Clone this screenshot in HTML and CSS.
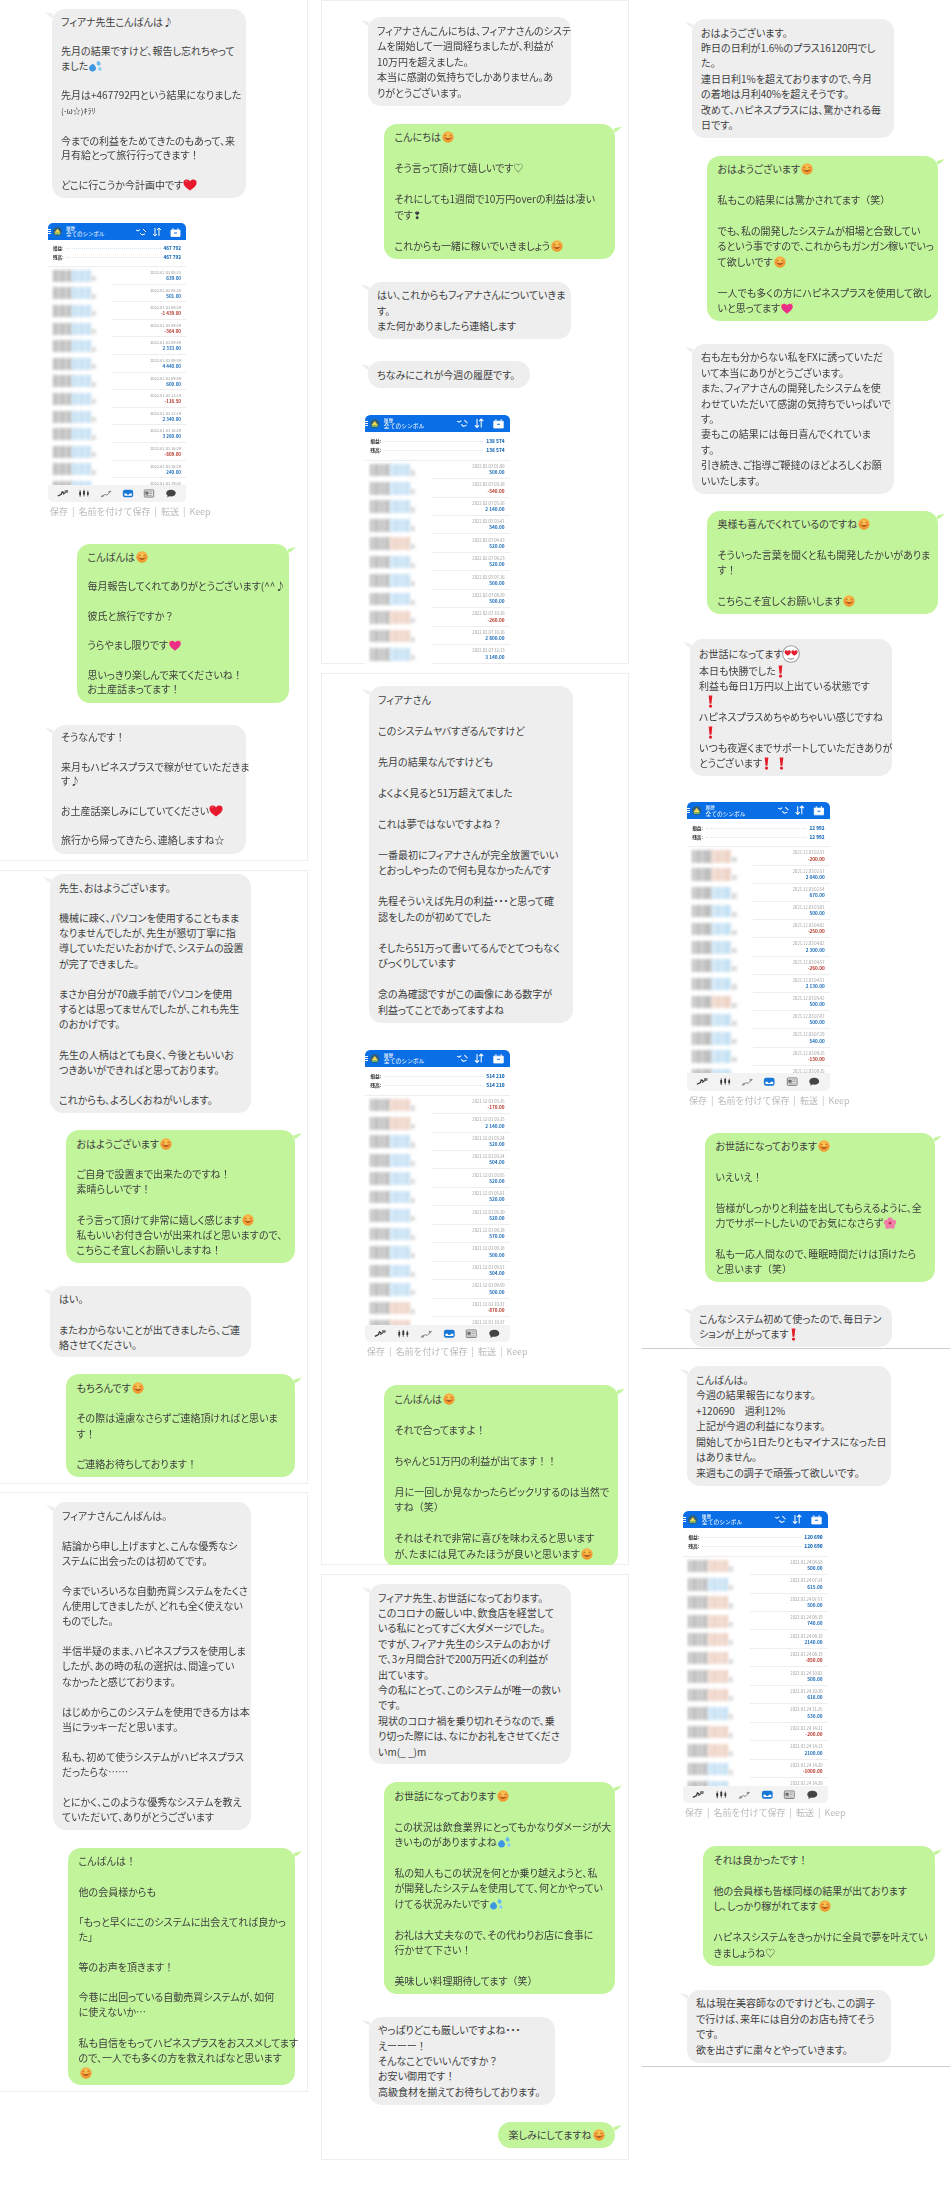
FILE: index.html
```html
<!DOCTYPE html>
<html lang="ja">
<head>
  <meta charset="UTF-8">
  <title>お客様の声</title>
  <link rel="stylesheet" href="styles.css">
</head>
<body>
  <!-- icon sprite -->
  <svg class="sprite" xmlns="http://www.w3.org/2000/svg">
    <defs>
      <radialGradient id="face" cx="50%" cy="35%" r="70%">
        <stop offset="0" stop-color="#ffc95a"/>
        <stop offset="1" stop-color="#ee8a22"/>
      </radialGradient>
    </defs>
    <symbol id="smile" viewBox="0 0 14 14">
      <circle cx="7" cy="7" r="6.6" fill="url(#face)"/>
      <path d="M3 5.6q1.2-1.4 2.4 0M8.6 5.6q1.2-1.4 2.4 0" fill="none" stroke="#8a4a10" stroke-width=".9"/>
      <path d="M3.4 8.2q3.6 3.8 7.2 0q-3.6 1.2-7.2 0z" fill="#b5391c" stroke="#8a4a10" stroke-width=".5"/>
      <ellipse cx="2.8" cy="7.8" rx="1.2" ry=".7" fill="#f47a4a"/>
      <ellipse cx="11.2" cy="7.8" rx="1.2" ry=".7" fill="#f47a4a"/>
    </symbol>
    <symbol id="heart" viewBox="0 0 14 12">
      <path d="M7 11.6C3 8.8.4 6.6.4 3.8.4 1.8 1.9.6 3.6.6 5 .6 6.2 1.2 7 2.4 7.8 1.2 9 .6 10.4.6c1.7 0 3.2 1.2 3.2 3.2 0 2.8-2.6 5-6.6 7.8z" fill="#e8192c"/>
      <path d="M2.4 3.2q.6-1.2 2-1.2" fill="none" stroke="#ff9aa0" stroke-width=".8"/>
    </symbol>
    <symbol id="pinkheart" viewBox="0 0 15 13">
      <path d="M7.5 12.6C3.6 9.8 1.2 7.6 1.2 5 1.2 3 2.7 1.8 4.3 1.8c1.4 0 2.5.6 3.2 1.8C8.2 2.4 9.4 1.8 10.7 1.8c1.7 0 3.1 1.2 3.1 3.2 0 2.6-2.4 4.8-6.3 7.6z" fill="#ec2f86"/>
      <path d="M1.6 1.6l.5 1 1 .4-1 .4-.5 1-.5-1-1-.4 1-.4zM13 .4l.4.9.9.3-.9.4-.4.9-.4-.9-.9-.4.9-.3z" fill="#f7b23a"/>
    </symbol>
    <symbol id="sweat" viewBox="0 0 13 11.500">
      <path d="M4.600 3.600C6.600 5.200 7.600 6.600 7.400 8.400 7.100 10.400 5.200 11.400 3.400 11 1.400 10.500.4 8.800.9 7 1.400 5.400 2.800 4.400 4.600 3.600z" fill="#3d97e2"/>
      <path d="M9.400.6c1.400 1 2.600 1.600 2.400 3.200-.2 1.200-1.400 1.800-2.400 1.400C8.200 4.800 7.800 3.600 8.200 2.600 8.500 1.800 8.800 1.200 9.400.6z" fill="#64b7ef"/>
      <path d="M11 6.400c1 .8 2 1.400 1.800 2.600-.2 1-1.200 1.400-2 1.200-1-.3-1.400-1.200-1-2.200.2-.6.6-1.200 1.200-1.600z" fill="#8ccdf5"/>
    </symbol>
    <symbol id="heart-eyes" viewBox="0 0 14 14">
      <circle cx="7" cy="7" r="6.500" fill="#fff" stroke="#9a9a9a" stroke-width=".8"/>
      <path d="M4.400 8.400C2.900 7.300 2 6.500 2 5.400 2 4.600 2.600 4.100 3.200 4.100c.5 0 1 .3 1.200.7.300-.4.700-.7 1.200-.7.700 0 1.300.5 1.300 1.300 0 1.100-.9 1.900-2.500 3zM9.600 8.400C8.100 7.300 7.200 6.500 7.200 5.400c0-.8.600-1.300 1.200-1.300.5 0 1 .3 1.200.7.300-.4.700-.7 1.200-.7.700 0 1.300.5 1.300 1.300 0 1.100-.9 1.900-2.500 3z" fill="#e5202e"/>
      <path d="M4.600 10.200q2.400 1.600 4.800 0" fill="none" stroke="#888" stroke-width=".8"/>
    </symbol>
    <symbol id="excl" viewBox="0 0 6 12">
      <path d="M1.300.4h3.400L3.900 8H2.100z" fill="#e3202a"/>
      <circle cx="3" cy="10.200" r="1.500" fill="#e3202a"/>
    </symbol>
    <symbol id="flower" viewBox="0 0 16 14">
      <g fill="#ee7ea8">
        <circle cx="8" cy="3.200" r="3"/>
        <circle cx="3.800" cy="6.200" r="3"/>
        <circle cx="12.200" cy="6.200" r="3"/>
        <circle cx="5.400" cy="10.800" r="3"/>
        <circle cx="10.600" cy="10.800" r="3"/>
      </g>
      <circle cx="8" cy="7.200" r="1.600" fill="#c9264f"/>
    </symbol>
    <!-- icons of the trading app -->
    <symbol id="t-quote" viewBox="0 0 14 10">
      <path d="M1 8l4-2 1-3 2 1M7 6l5-4" fill="none" stroke="#333" stroke-width="1.400"/>
      <rect x="9" y="1" width="4" height="3" fill="#777"/>
    </symbol>
    <symbol id="t-chart" viewBox="0 0 14 10">
      <path d="M2.500 1v8M7 .5v8M11.500 1.500v7" stroke="#333" stroke-width=".8"/>
      <path d="M1.500 3h2v4h-2zM6 2h2v4.500H6zM10.500 3.500h2v3h-2z" fill="#333"/>
    </symbol>
    <symbol id="t-trade" viewBox="0 0 14 10">
      <path d="M1 9l5-3 2 1 5-5" fill="none" stroke="#666" stroke-width=".9"/>
      <circle cx="11" cy="3" r="1.300" fill="#888"/>
      <circle cx="3" cy="8" r="1.300" fill="#888"/>
    </symbol>
    <symbol id="t-hist" viewBox="0 0 14 10">
      <path d="M1 3q0-2.500 2.500-2.500h7Q13 .5 13 3v4q0 2.500-2.500 2.500h-7Q1 9.500 1 7z" fill="#1878d8"/>
      <path d="M2.500 5h2.700l.8 1.500h2l.8-1.500h2.700v2.600h-8.500z" fill="#fff"/>
    </symbol>
    <symbol id="t-news" viewBox="0 0 14 10">
      <rect x="1.500" y=".8" width="11" height="8.400" rx=".8" fill="#eee" stroke="#555" stroke-width=".8"/>
      <path d="M3 3h3v3H3zM7 3h4M7 5h4M3 7.500h8" stroke="#555" stroke-width=".6" fill="#777"/>
    </symbol>
    <symbol id="t-chat" viewBox="0 0 14 10">
      <path d="M7 .5c3.300 0 5.600 1.700 5.600 4S10.300 8.500 7 8.500c-.7 0-1.400-.1-2-.2L2.500 9.700l.6-2.200C2 6.800 1.400 5.700 1.400 4.500c0-2.300 2.300-4 5.600-4z" fill="#444"/>
    </symbol>
  </svg>

  <div class="page">
    <!-- Left column -->
    <div class="col">
      <section class="panel panel-a">
        <div class="msg gray gap-9">フィアナ先生こんばんは♪<br><br>先月の結果ですけど、報告し忘れちゃって<br>ました<svg class="emo"><use href="#sweat"/></svg><br><br>先月は+467792円という結果になりました<br><small>(-ω☆)ｷﾗﾘ</small><br><br>今までの利益をためてきたのもあって、来<br>月有給とって旅行行ってきます！<br><br>どこに行こうか今計画中です<svg class="emo"><use href="#heart"/></svg></div>
        <div class="shot-wrap gap-25"><div class="shot" data-shot="a"></div><p class="caption">保存 | 名前を付けて保存 | 転送 | Keep</p></div>
        <div class="msg green gap-26">こんばんは<svg class="emo"><use href="#smile"/></svg><br><br>毎月報告してくれてありがとうございます(^^♪<br><br>彼氏と旅行ですか？<br><br>うらやまし限りです<svg class="emo"><use href="#pinkheart"/></svg><br><br>思いっきり楽しんで来てくださいね！<br>お土産話まってます！</div>
        <div class="msg gray gap-22">そうなんです！<br><br>来月もハピネスプラスで稼がせていただきま<br>す♪<br><br>お土産話楽しみにしていてください<svg class="emo"><use href="#heart"/></svg><br><br>旅行から帰ってきたら、連絡しますね☆</div>
      </section>

      <section class="panel panel-b">
        <div class="msg gray gap-4">先生、おはようございます。<br><br>機械に疎く、パソコンを使用することもまま<br>なりませんでしたが、先生が懇切丁寧に指<br>導していただいたおかげで、システムの設置<br>が完了できました。<br><br>まさか自分が70歳手前でパソコンを使用<br>するとは思ってませんでしたが、これも先生<br>のおかげです。<br><br>先生の人柄はとても良く、今後ともいいお<br>つきあいができればと思っております。<br><br>これからも、よろしくおねがいします。</div>
        <div class="msg green gap-17">おはようございます<svg class="emo"><use href="#smile"/></svg><br><br>ご自身で設置まで出来たのですね！<br>素晴らしいです！<br><br>そう言って頂けて非常に嬉しく感じます<svg class="emo"><use href="#smile"/></svg><br>私もいいお付き合いが出来ればと思いますので、<br>こちらこそ宜しくお願いしますね！</div>
        <div class="msg gray gap-23">はい。<br><br>またわからないことが出てきましたら、ご連<br>絡させてください。</div>
        <div class="msg green gap-17">もちろんです<svg class="emo"><use href="#smile"/></svg><br><br>その際は遠慮なさらずご連絡頂ければと思いま<br>す！<br><br>ご連絡お待ちしております！</div>
      </section>

      <section class="panel panel-c">
        <div class="msg gray gap-10">フィアナさんこんばんは。<br><br>結論から申し上げますと、こんな優秀なシ<br>ステムに出会ったのは初めてです。<br><br>今までいろいろな自動売買システムをたくさ<br>ん使用してきましたが、どれも全く使えない<br>ものでした。<br><br>半信半疑のまま、ハピネスプラスを使用しま<br>したが、あの時の私の選択は、間違ってい<br>なかったと感じております。<br><br>はじめからこのシステムを使用できる方は本<br>当にラッキーだと思います。<br><br>私も、初めて使うシステムがハピネスプラス<br>だったらな……<br><br>とにかく、このような優秀なシステムを教え<br>ていただいて、ありがとうございます</div>
        <div class="msg green gap-18">こんばんは！<br><br>他の会員様からも<br><br>「もっと早くにこのシステムに出会えてれば良かっ<br>た」<br><br>等のお声を頂きます！<br><br>今巷に出回っている自動売買システムが、如何<br>に使えないか…<br><br>私も自信をもってハピネスプラスをおススメしてます<br>ので、一人でも多くの方を救えればなと思います<br><svg class="emo"><use href="#smile"/></svg></div>
      </section>
    </div>

    <!-- Middle column -->
    <div class="col">
      <section class="panel panel-d">
        <div class="msg gray gap-17">フィアナさんこんにちは、フィアナさんのシステ<br>ムを開始して一週間経ちましたが、利益が<br>10万円を超えました。<br>本当に感謝の気持ちでしかありません。あ<br>りがとうございます。</div>
        <div class="msg green gap-18">こんにちは<svg class="emo"><use href="#smile"/></svg><br><br>そう言って頂けて嬉しいです♡<br><br>それにしても1週間で10万円overの利益は凄い<br>です❢<br><br>これからも一緒に稼いでいきましょう<svg class="emo"><use href="#smile"/></svg></div>
        <div class="msg gray gap-23">はい、これからもフィアナさんについていきま<br>す。<br>また何かありましたら連絡します</div>
        <div class="msg gray w-162 gap-22">ちなみにこれが今週の履歴です。</div>
        <div class="shot-wrap gap-27"><div class="shot" data-shot="b"></div></div>
      </section>

      <section class="panel panel-e">
        <div class="msg gray gap-13">フィアナさん<br><br>このシステムヤバすぎるんですけど<br><br>先月の結果なんですけども<br><br>よくよく見ると51万超えてました<br><br>これは夢ではないですよね？<br><br>一番最初にフィアナさんが完全放置でいい<br>とおっしゃったので何も見なかったんです<br><br>先程そういえば先月の利益・・・と思って確<br>認をしたのが初めてでした<br><br>そしたら51万って書いてるんでとてつもなく<br>びっくりしています<br><br>念の為確認ですがこの画像にある数字が<br>利益ってことであってますよね</div>
        <div class="shot-wrap gap-27"><div class="shot" data-shot="c"></div><p class="caption">保存 | 名前を付けて保存 | 転送 | Keep</p></div>
        <div class="msg green gap-27">こんばんは<svg class="emo"><use href="#smile"/></svg><br><br>それで合ってますよ！<br><br>ちゃんと51万円の利益が出てます！！<br><br>月に一回しか見なかったらビックリするのは当然で<br>すね（笑）<br><br>それはそれで非常に喜びを味わえると思います<br>が、たまには見てみたほうが良いと思います<svg class="emo"><use href="#smile"/></svg></div>
      </section>

      <section class="panel panel-f">
        <div class="msg gray gap-10">フィアナ先生、お世話になっております。<br>このコロナの厳しい中、飲食店を経営して<br>いる私にとってすごく大ダメージでした。<br>ですが、フィアナ先生のシステムのおかげ<br>で、3ヶ月間合計で200万円近くの利益が<br>出ています。<br>今の私にとって、このシステムが唯一の救い<br>です。<br>現状のコロナ禍を乗り切れそうなので、乗<br>り切った際には、なにかお礼をさせてくださ<br>いm(_ _)m</div>
        <div class="msg green gap-18">お世話になっております<svg class="emo"><use href="#smile"/></svg><br><br>この状況は飲食業界にとってもかなりダメージが大<br>きいものがありますよね<svg class="emo"><use href="#sweat"/></svg><br><br>私の知人もこの状況を何とか乗り越えようと、私<br>が開発したシステムを使用してて、何とかやってい<br>けてる状況みたいです<svg class="emo"><use href="#sweat"/></svg><br><br>お礼は大丈夫なので、その代わりお店に食事に<br>行かせて下さい！<br><br>美味しい料理期待してます（笑）</div>
        <div class="msg gray w-186 gap-23">やっぱりどこも厳しいですよね・・・<br>えーーー！<br>そんなことでいいんですか？<br>お安い御用です！<br>高級食材を揃えてお待ちしております。</div>
        <div class="msg green w-117 gap-17">楽しみにしてますね<svg class="emo"><use href="#smile"/></svg></div>
      </section>
    </div>

    <!-- Right column -->
    <div class="col">
      <section class="panel panel-g">
        <div class="msg gray gap-19">おはようございます。<br>昨日の日利が1.6%のプラス16120円でし<br>た。<br>連日日利1%を超えておりますので、今月<br>の着地は月利40%を超えそうです。<br>改めて、ハピネスプラスには、驚かされる毎<br>日です。</div>
        <div class="msg green gap-18">おはようございます<svg class="emo"><use href="#smile"/></svg><br><br>私もこの結果には驚かされてます（笑）<br><br>でも、私の開発したシステムが相場と合致してい<br>るという事ですので、これからもガンガン稼いでいっ<br>て欲しいです<svg class="emo"><use href="#smile"/></svg><br><br>一人でも多くの方にハピネスプラスを使用して欲し<br>いと思ってます<svg class="emo"><use href="#pinkheart"/></svg></div>
        <div class="msg gray gap-23">右も左も分からない私をFXに誘っていただ<br>いて本当にありがとうございます。<br>また、フィアナさんの開発したシステムを使<br>わせていただいて感謝の気持ちでいっぱいで<br>す。<br>妻もこの結果には毎日喜んでくれていま<br>す。<br>引き続き、ご指導ご鞭撻のほどよろしくお願<br>いいたします。</div>
        <div class="msg green gap-17">奥様も喜んでくれているのですね<svg class="emo"><use href="#smile"/></svg><br><br>そういった言葉を聞くと私も開発したかいがありま<br>す！<br><br>こちらこそ宜しくお願いします<svg class="emo"><use href="#smile"/></svg></div>
        <div class="msg gray lower gap-25">お世話になってます<svg class="emo emo-big"><use href="#heart-eyes"/></svg><br>本日も快勝でした<svg class="emo excl"><use href="#excl"/></svg><br>利益も毎日1万円以上出ている状態です<br>&nbsp;&nbsp;&nbsp;<svg class="emo excl"><use href="#excl"/></svg><br>ハピネスプラスめちゃめちゃいい感じですね<br>&nbsp;&nbsp;&nbsp;<svg class="emo excl"><use href="#excl"/></svg><br>いつも夜遅くまでサポートしていただきありが<br>とうございます<svg class="emo excl"><use href="#excl"/></svg>&nbsp;&nbsp;&nbsp;<svg class="emo excl"><use href="#excl"/></svg></div>
        <div class="shot-wrap gap-26"><div class="shot" data-shot="d"></div><p class="caption">保存 | 名前を付けて保存 | 転送 | Keep</p></div>
        <div class="msg green lower gap-26">お世話になっております<svg class="emo"><use href="#smile"/></svg><br><br>いえいえ！<br><br>皆様がしっかりと利益を出してもらえるように、全<br>力でサポートしたいのでお気になさらず<svg class="emo"><use href="#flower"/></svg><br><br>私も一応人間なので、睡眠時間だけは頂けたら<br>と思います（笑）</div>
        <div class="msg gray lower gap-23">こんなシステム初めて使ったので、毎日テン<br>ションが上がってます<svg class="emo excl"><use href="#excl"/></svg></div>
      </section>

      <section class="panel panel-i">
        <div class="msg gray gap-17">こんばんは。<br>今週の結果報告になります。<br>+120690　週利12%<br>上記が今週の利益になります。<br>開始してから1日たりともマイナスになった日<br>はありません。<br>来週もこの調子で頑張って欲しいです。</div>
        <div class="shot-wrap gap-25"><div class="shot" data-shot="e"></div><p class="caption">保存 | 名前を付けて保存 | 転送 | Keep</p></div>
        <div class="msg green gap-27">それは良かったです！<br><br>他の会員様も皆様同様の結果が出ております<br>し、しっかり稼がれてます<svg class="emo"><use href="#smile"/></svg><br><br>ハピネスシステムをきっかけに全員で夢を叶えてい<br>きましょうね♡</div>
        <div class="msg gray gap-24">私は現在美容師なのですけども、この調子<br>で行けば、来年には自分のお店も持てそう<br>です。<br>欲を出さずに粛々とやっていきます。</div>
      </section>
    </div>
  </div>

  <script>
  // Full-width punctuation keeps its side space, the kana stay proportional
  document.querySelectorAll(".msg").forEach((msg) => {
    msg.innerHTML = msg.innerHTML.replace(/[！？（）]/g, '<span class="fw">$&</span>');
  });

  // Trading history screenshots: [time, profit, tint of the blurred symbol]
  // The last row of a list runs under the tab bar, so it has no profit to show
  const shotData = {
    a: { total: "467 792", day: "2022.01.03", rows: [
      ["08:15", "639.00", "b"], ["08:38", "501.00", "b"], ["09:29", "-1 439.00", "b"], ["09:29", "-364.00", "b"],
      ["09:59", "2 333.00", "b"], ["09:59", "4 440.00", "b"], ["09:59", "600.00", "b"], ["13:19", "-116.50", "b"],
      ["13:19", "2 340.00", "b"], ["16:29", "3 260.00", "b"], ["16:29", "-809.00", "b"], ["16:29", "240.00", "b"], ["19:55", "", "b"]
    ] },
    b: { total: "138 574", day: "2022.02.07", rows: [
      ["01:06", "500.00", "b"], ["03:16", "-540.00", "b"], ["03:16", "2 140.00", "b"], ["03:41", "540.00", "b"],
      ["04:43", "520.00", "r"], ["06:23", "520.00", "b"], ["07:16", "500.00", "b"], ["08:29", "500.00", "b"],
      ["10:16", "-260.00", "r"], ["10:16", "2 800.00", "r"], ["12:13", "3 140.00", "b"]
    ] },
    c: { total: "514 210", day: "2021.12.01", rows: [
      ["03:15", "-170.00", "r"], ["03:15", "2 140.00", "r"], ["03:24", "520.00", "b"], ["03:24", "504.00", "b"],
      ["03:55", "520.00", "b"], ["05:01", "520.00", "b"], ["05:30", "520.00", "b"], ["08:18", "570.00", "b"],
      ["09:18", "500.00", "b"], ["09:57", "504.00", "b"], ["09:59", "500.00", "b"], ["10:37", "-870.00", "r"], ["10:37", "", "r"]
    ] },
    d: { total: "12 992", day: "2021.12.03", rows: [
      ["02:57", "-200.00", "r"], ["02:57", "2 040.00", "r"], ["02:54", "670.00", "b"], ["03:01", "500.00", "b"],
      ["04:02", "-250.00", "b"], ["04:02", "2 300.00", "b"], ["04:57", "-260.00", "b"], ["04:57", "2 130.00", "b"],
      ["05:42", "500.00", "r"], ["07:07", "500.00", "b"], ["07:29", "540.00", "b"], ["09:15", "-130.00", "b"], ["09:15", "", "b"]
    ] },
    e: { total: "120 690", day: "2022.01.24", rows: [
      ["04:58", "500.00", "r"], ["07:24", "615.00", "b"], ["07:57", "500.00", "r"], ["08:19", "740.00", "r"],
      ["08:19", "2140.00", "r"], ["08:19", "-850.00", "r"], ["10:02", "500.00", "r"], ["10:30", "616.00", "r"],
      ["11:25", "530.00", "b"], ["14:11", "-200.00", "r"], ["14:13", "2100.00", "r"], ["14:20", "-1000.00", "b"], ["14:20", "", "b"]
    ] }
  };

  const tabs = ["t-quote", "t-chart", "t-trade", "t-hist", "t-news", "t-chat"];

  document.querySelectorAll(".shot").forEach((shot) => {
    const data = shotData[shot.dataset.shot];
    const rows = data.rows.map(([time, value, tint]) => `
      <div class="row">
        <div class="row-name"><i class="smear"></i><i class="smear smear-${tint}"></i><i class="smear smear-end"></i></div>
        <div class="row-values">
          <span class="row-date">${data.day} ${time}</span>
          ${value ? `<b class="${value.startsWith("-") ? "neg" : "pos"}">${value}</b>` : ""}
        </div>
      </div>`).join("");
    shot.innerHTML = `
      <div class="shot-head">
        <span class="burger"></span>
        <svg class="shot-logo" viewBox="0 0 10 10"><circle cx="5" cy="5" r="5" fill="#2e5f7e"/><path d="M1.500 6.500L5 2l3.500 4.500z" fill="#f4d44c"/><path d="M2 7.500h6" stroke="#8fd06a" stroke-width="1.500"/></svg>
        <div class="shot-title"><span>履歴</span><span>全てのシンボル</span></div>
        <svg class="head-icons" viewBox="0 0 46 10" fill="none" stroke="#fff">
          <path d="M1 3l2 1 2-1.500M5 6l2 2 3-1M8 2l3 3" stroke-width="1"/>
          <path d="M20 1v8M18 7l2 2 2-2M24 9V1M22 3l2-2 2 2" stroke-width="1"/>
          <path d="M36 3h9v6.500h-9z M38 1v2M43 1v2" fill="#fff" stroke-width=".8"/>
          <path d="M39 6h3" stroke="#0a6fe6"/>
        </svg>
      </div>
      <div class="shot-total"><span>損益:</span><i></i><b>${data.total}</b></div>
      <div class="shot-total"><span>残高:</span><i></i><b>${data.total}</b></div>
      <div class="shot-rows">${rows}</div>
      <div class="shot-tabs">${tabs.map((t) => `<svg><use href="#${t}"/></svg>`).join("")}</div>`;
  });
  </script>
</body>
</html>
```

FILE: styles.css
```css
/* General Styling */
body {
  margin: 0;
  background: #fff;
  color: #3e3e3e;
  font-family: "Noto Sans CJK JP", "Noto Sans", sans-serif;
  font-size: 10px;
  font-feature-settings: "palt";
  overflow: hidden;
}

.sprite {
  position: absolute;
  width: 0;
  height: 0;
}

.page {
  display: flex;
  gap: 13px;
  width: 950px;
  height: 2205px;
  filter: blur(0.3px);
}

.col {
  width: 308px;
  flex: none;
}

/* Panels hold one chat each, values differ a little from one to the next */
.panel {
  display: flex;
  flex-direction: column;
  overflow: hidden;
  line-height: var(--lh);
}

.panel-a {
  --lh: 14.75px; --gx: 52px; --gw: 194px; --pr: 19px; --pw: 212px; --sx: 48px;
  height: 861px;
  box-shadow: inset -1px -1px 0 #eee;
}

.panel-b {
  --lh: 15.2px; --gx: 50px; --gw: 201px; --pr: 13px; --pw: 229px;
  height: 614px;
  margin-top: 9px;
  box-shadow: inset -1px 0 0 #eee, inset 0 1px 0 #eee, inset 0 -1px 0 #eee;
}

.panel-c {
  --lh: 15.1px; --gx: 53px; --gw: 198px; --pr: 13px; --pw: 227px;
  height: 600px;
  margin-top: 8px;
  box-shadow: inset -1px 0 0 #eee, inset 0 1px 0 #eee, inset 0 -1px 0 #eee;
}

.panel-d {
  --lh: 15.5px; --gx: 47px; --gw: 203px; --pr: 14px; --pw: 231px; --sx: 44px;
  height: 664px;
  box-shadow: inset 0 0 0 1px #eee, inset 0 -1px 0 #bbb;
}

.panel-e {
  --lh: 15.5px; --gx: 48px; --gw: 204px; --pr: 11px; --pw: 234px; --sx: 44px;
  height: 892px;
  margin-top: 9px;
  box-shadow: inset 0 0 0 1px #eee;
}

.panel-f {
  --lh: 15.4px; --gx: 48px; --gw: 202px; --pr: 14px; --pw: 231px;
  height: 586px;
  margin-top: 9px;
  box-shadow: inset 0 0 0 1px #eee;
}

.panel-g {
  --lh: 15.4px; --gx: 50px; --gw: 202px; --pr: 12px; --pw: 231px; --sx: 45px;
  height: 1349px;
  box-shadow: inset 0 -1px 0 #ccc;
}

.panel-g .lower {
  --gx: 48px;
  --pr: 15px;
  --pw: 230px;
}

.panel-i {
  --lh: 15.5px; --gx: 45px; --gw: 204px; --pr: 15px; --pw: 232px; --sx: 41px;
  height: 718px;
  box-shadow: inset 0 -1px 0 #ccc;
}

/* Bubbles */
.msg {
  position: relative;
  flex: none;
  box-sizing: border-box;
  padding-top: 5.5px;
  padding-bottom: 5.5px;
  border-radius: 13px;
  white-space: nowrap;
}

.gray {
  align-self: flex-start;
  margin-left: var(--gx);
  width: var(--gw);
  padding-left: 9px;
  background: #eee;
}

.green {
  align-self: flex-end;
  margin-right: var(--pr);
  width: var(--pw);
  padding-left: 10.5px;
  background: #c2f59b;
}

.msg::before {
  content: "";
  position: absolute;
  top: 3px;
  width: 8px;
  height: 6px;
  background: inherit;
}

.gray::before {
  left: -7px;
  clip-path: polygon(0 0, 100% 35%, 100% 100%, 55% 70%);
}

.green::before {
  right: -7px;
  clip-path: polygon(100% 0, 0 35%, 0 100%, 45% 70%);
}

.fw {
  font-feature-settings: normal;
}

.w-162 { width: 162px; }
.w-186 { width: 186px; }
.w-117 { width: 117px; }

.gap-4 { margin-top: 4px; }
.gap-9 { margin-top: 9px; }
.gap-10 { margin-top: 10px; }
.gap-13 { margin-top: 13px; }
.gap-17 { margin-top: 17px; }
.gap-18 { margin-top: 18px; }
.gap-19 { margin-top: 19px; }
.gap-22 { margin-top: 22px; }
.gap-23 { margin-top: 23px; }
.gap-24 { margin-top: 24px; }
.gap-25 { margin-top: 25px; }
.gap-26 { margin-top: 26px; }
.gap-27 { margin-top: 27px; }

small {
  font-size: 8px;
}

/* Emoji */
.emo {
  width: 14px;
  height: 12px;
  vertical-align: -2px;
}

.emo-big {
  width: 18px;
  height: 18px;
  vertical-align: -5px;
}

.excl {
  width: 7px;
  height: 13px;
  margin-left: 1px;
  vertical-align: -3px;
}

/* Trading app screenshots */
.shot-wrap {
  flex: none;
  margin-left: var(--sx);
}

.caption {
  margin: 3px 0 0 2px;
  height: 13px;
  font-size: 9px;
  line-height: 13px;
  color: #bbb;
  white-space: nowrap;
  word-spacing: 2px;
  font-feature-settings: normal;
}

.shot {
  display: flex;
  flex-direction: column;
  width: 138px;
  height: 279px;
  overflow: hidden;
  border-radius: 5px;
  background: #fff;
  color: #444;
  font-size: 4.5px;
  line-height: 1;
  font-feature-settings: normal;
}

.shot[data-shot="b"],
.shot[data-shot="c"] { zoom: 1.05; }
.shot[data-shot="d"] { zoom: 1.035; }
.shot[data-shot="e"] { zoom: 1.05; }

.shot-head {
  display: flex;
  align-items: center;
  flex: none;
  height: 17px;
  background: #0a6fe6;
  color: #fff;
}

.burger {
  width: 3px;
  height: 5px;
  background: repeating-linear-gradient(#fff 0 1px, transparent 1px 2px);
}

.shot-logo {
  width: 9px;
  height: 9px;
  margin-left: 2px;
}

.shot-title {
  display: flex;
  flex-direction: column;
  gap: 1px;
  margin-left: 4px;
  flex: 1;
}

.shot-title span:last-child {
  font-size: 5.5px;
}

.head-icons {
  width: 46px;
  height: 10px;
  margin-right: 5px;
}

.shot-total {
  display: flex;
  align-items: center;
  flex: none;
  height: 9px;
  padding: 0 5px;
  font-weight: 700;
  color: #333;
}

.shot-head + .shot-total {
  margin-top: 4px;
}

.shot-total i {
  flex: 1;
  margin: 0 3px;
  border-bottom: 1px dotted #d5e4f2;
}

.shot-total b {
  color: #1c6cb8;
}

.shot-rows {
  flex: 1;
  min-height: 0;
  margin-top: 4px;
  overflow: hidden;
  border-top: 1px solid #eee;
}

.row {
  display: flex;
  height: 17.6px;
}

.row-name {
  display: flex;
  align-items: center;
  width: 64px;
  padding-left: 5px;
  box-sizing: border-box;
}

.smear {
  width: 19px;
  height: 12px;
  background: repeating-linear-gradient(90deg, #b4b4b4 0 2px, #e2e2e2 2px 3.5px);
  filter: blur(1.4px);
}

.smear-b {
  background: repeating-linear-gradient(90deg, #bcdcf2 0 2px, #e8f3fb 2px 3.5px);
}

.smear-r {
  background: repeating-linear-gradient(90deg, #ecccbe 0 2px, #f8ebe4 2px 3.5px);
}

.smear-end {
  width: 5px;
  height: 5px;
  margin-top: 6px;
  background: #dcdcdc;
}

.row-values {
  display: flex;
  flex-direction: column;
  align-items: flex-end;
  gap: 2px;
  flex: 1;
  padding: 3px 5px 0 0;
  box-sizing: border-box;
  border-bottom: 1px solid #eee;
}

.row-date {
  font-size: 4px;
  color: #999;
}

.row-values .pos { color: #1c6cb8; }
.row-values .neg { color: #b5382a; }

.shot-tabs {
  display: flex;
  align-items: center;
  justify-content: space-around;
  flex: none;
  height: 17px;
  padding: 0 4px;
  background: #f3f3f3;
}

.shot-tabs svg {
  width: 12px;
  height: 9px;
}
```
